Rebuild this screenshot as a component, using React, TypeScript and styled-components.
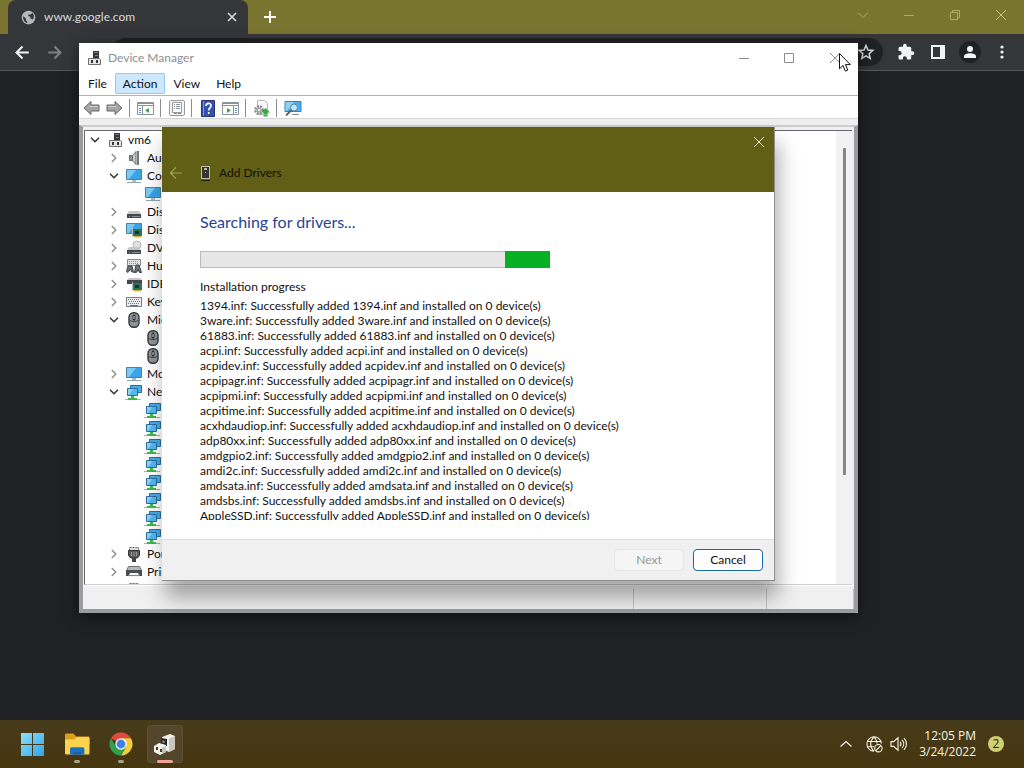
import React from "react";
import styled, { createGlobalStyle, css } from "styled-components";

const GlobalStyle = createGlobalStyle`
  * { box-sizing: border-box; }
  html, body, #root { height: 100%; }
  body {
    margin: 0;
    overflow: hidden;
    background: #202124;
    font-family: Lato, "Open Sans", sans-serif;
    font-size: 12px;
    line-height: 16px;
    color: #111;
  }
  button, input { font: inherit; color: inherit; }
  button { border: 0; padding: 0; background: none; }
  svg { display: block; flex: none; }
`;

/* ---------- Desktop ---------- */

const Desktop = styled.div`
  position: relative;
  display: flex;
  flex-direction: column;
  height: 100vh;
`;

/* ---------- Browser ---------- */

const Browser = styled.main`
  flex: 1;
  display: flex;
  flex-direction: column;
  background: #202124;
`;

const TabStrip = styled.header`
  display: flex;
  height: 34px;
  padding-left: 8px;
  background: #7a7431;
`;

const Tab = styled.div`
  display: flex;
  align-items: center;
  gap: 8px;
  width: 240px;
  padding: 0 8px 0 13px;
  border-radius: 8px 8px 0 0;
  background: #35363a;
  color: #d8d9dc;
`;

const TabTitle = styled.span`
  flex: 1;
`;

const IconButton = styled.button<{ $w?: number; $h?: number }>`
  display: flex;
  align-items: center;
  justify-content: center;
  width: ${(p) => p.$w ?? 16}px;
  height: ${(p) => p.$h ?? 16}px;
`;

const CaptionButtons = styled.div`
  display: flex;
  margin-left: auto;
`;

const BrowserBar = styled.div`
  display: flex;
  align-items: center;
  height: 37px;
  padding: 0 6px;
  border-bottom: 1px solid #55565a;
  background: #35363a;
  color: #f1f3f4;
`;

const AddressBar = styled.div`
  flex: 1;
  display: flex;
  align-items: center;
  height: 28px;
  margin: 0 7px 0 42px;
  padding-right: 8px;
  border-radius: 14px;
  background: #202124;
`;

const AddressInput = styled.input`
  flex: 1;
  min-width: 0;
  padding: 0 14px;
  border: 0;
  outline: 0;
  background: none;
`;

/* ---------- Device Manager window ---------- */

const ManagerWindow = styled.section`
  position: absolute;
  left: 79px;
  top: 43px;
  display: flex;
  flex-direction: column;
  width: 779px;
  height: 570px;
  background: #fff;
  box-shadow: 0 4px 14px rgba(0, 0, 0, 0.5);
`;

const TitleBar = styled.header`
  display: flex;
  align-items: center;
  gap: 6px;
  height: 29px;
  padding-left: 7px;
  color: #8e8e8e;
`;

const MenuBar = styled.nav`
  display: flex;
  height: 24px;
  padding: 1px;
  border-bottom: 1px solid #b4b4b4;
`;

const MenuItem = styled.button<{ $active?: boolean }>`
  padding: 0 8px;
  ${(p) =>
    p.$active &&
    css`
      background: #cce8ff;
      box-shadow: inset 0 0 0 1px #99c9ef;
      border-radius: 2px;
    `}
`;

const ToolBar = styled.div`
  display: flex;
  align-items: center;
  height: 23px;
  padding: 2px 0 0 1px;
  border-bottom: 1px solid #d5d5d5;
`;

const ToolSeparator = styled.span`
  width: 1px;
  height: 18px;
  margin: 0 4px 0 3px;
  background: #8c8c8c;
`;

const ManagerBody = styled.div`
  flex: 1;
  display: flex;
  flex-direction: column;
  min-height: 0;
  margin-top: 6px;
  border: solid #9b9b9f;
  border-width: 2px 4px 4px;
  border-top-color: #cbccd0;
  background: #f0f0f0;
  box-shadow: 0 -6px 0 #efefef;
`;

const TreePane = styled.div`
  flex: 1;
  display: flex;
  min-height: 0;
  margin: 3px 2px 0 1px;
  border: 1px solid #66666c;
  border-right: 0;
  border-bottom-color: #d0d0d0;
  background: #fff;
`;

const Tree = styled.ul`
  flex: 1;
  margin: 0;
  padding: 0;
  overflow: hidden;
  list-style: none;
`;

const TreeRow = styled.li<{ $level: number }>`
  display: flex;
  align-items: center;
  height: 18px;
  padding-left: ${(p) => 2 + p.$level * 19}px;
`;

const Twisty = styled.span`
  display: flex;
  justify-content: center;
  width: 16px;
`;

const TreeIcon = styled.span`
  display: flex;
  justify-content: center;
  width: 24px;
  margin-right: 1px;
`;

const ScrollTrack = styled.div`
  width: 16px;
  padding: 17px 6px 109px 7px;
  background: #f2f2f2;
`;

const ScrollThumb = styled.div`
  height: 100%;
  border-radius: 1px;
  background: #858585;
`;

const StatusBar = styled.footer`
  display: grid;
  grid-template-columns: 1fr 133px 87px;
  height: 24px;
  padding-top: 3px;
  border-top: 1px solid #fff;
`;

const StatusCell = styled.span`
  border-right: 1px solid #c4c4c4;
`;

/* ---------- Add Drivers dialog ---------- */

const Dialog = styled.section`
  position: absolute;
  left: 162px;
  top: 127px;
  display: flex;
  flex-direction: column;
  width: 613px;
  height: 454px;
  border: solid #8f8f8f;
  border-width: 0 1px 1px 0;
  background: #fff;
  box-shadow: 3px 16px 20px rgba(0, 0, 0, 0.34);
`;

const DialogHead = styled.header`
  display: flex;
  flex-direction: column;
  height: 65px;
  background: #615f15;
`;

const DialogCaption = styled.div`
  display: flex;
  justify-content: flex-end;
`;

const DialogTitle = styled.div`
  display: flex;
  align-items: center;
  height: 34px;
  padding-left: 6px;
  color: #0f0f05;
`;

const DialogGlyph = styled.span`
  padding: 0 9px 0 17px;
`;

const DialogBody = styled.div`
  flex: 1;
  min-height: 0;
  padding: 19px 38px 0;
`;

const Heading = styled.h1`
  margin: 0 0 19px;
  font-size: 16px;
  line-height: 21px;
  font-weight: 400;
  color: #1f4596;
`;

const Progress = styled.div`
  display: flex;
  justify-content: flex-end;
  width: 350px;
  height: 17px;
  margin-bottom: 11px;
  border: 1px solid #bcbcbc;
  background: #e6e6e6;
`;

const ProgressChunk = styled.span`
  width: 45px;
  margin: -1px;
  background: #06b025;
`;

const LogLabel = styled.h2`
  margin: 0 0 3px;
  font-size: 12px;
  line-height: 16px;
  font-weight: 400;
`;

const Log = styled.ul`
  height: 222px;
  margin: 0;
  padding: 0;
  overflow: hidden;
  list-style: none;
`;

const LogLine = styled.li`
  line-height: 15px;
  white-space: nowrap;
`;

const DialogFoot = styled.footer`
  display: flex;
  align-items: center;
  justify-content: flex-end;
  gap: 9px;
  height: 41px;
  padding: 0 11px 0 0;
  border-top: 1px solid #dfdfdf;
  background: #f0f0f0;
`;

const PushButton = styled.button`
  width: 70px;
  height: 22px;
  border: 1px solid #1c6ba0;
  border-radius: 4px;
  background: #fdfdfd;
  &:disabled {
    border-color: #e6e6e6;
    background: #f5f5f5;
    color: #959595;
  }
`;

/* ---------- Taskbar ---------- */

const Taskbar = styled.footer`
  display: flex;
  align-items: center;
  height: 48px;
  padding: 0 20px 0 15px;
  background: linear-gradient(#483b1b, #45360f);
  color: #f7f4e6;
  font-family: "Open Sans", sans-serif;
`;

const TaskButton = styled.button<{ $active?: boolean }>`
  display: flex;
  flex-direction: column;
  align-items: center;
  justify-content: space-between;
  width: 36px;
  height: 38px;
  margin-right: 8px;
  padding: 7px 0 0;
  border-radius: 4px;
  ${(p) =>
    p.$active &&
    css`
      background: #54462b;
      box-shadow: inset 0 0 0 1px #5e5032;
    `}
`;

const RunMark = styled.span<{ $active?: boolean; $hidden?: boolean }>`
  width: ${(p) => (p.$active ? 16 : 6)}px;
  height: 3px;
  border-radius: 2px;
  background: ${(p) => (p.$hidden ? "transparent" : p.$active ? "#f0a39a" : "#a9a487")};
`;

const Tray = styled.div`
  display: flex;
  align-items: center;
  gap: 8px;
  margin-left: auto;
`;

const Clock = styled.time`
  display: flex;
  flex-direction: column;
  width: 62px;
  text-align: right;
  white-space: nowrap;
`;

const Badge = styled.span`
  width: 16px;
  margin-left: 4px;
  border-radius: 8px;
  background: #d2cd73;
  color: #2b250c;
  font-size: 12px;
  text-align: center;
`;

const Pointer = styled.span`
  position: absolute;
  left: 838px;
  top: 52px;
`;

/* ---------- Icons ---------- */

type StrokeProps = { d: string; size?: number; color?: string; width?: number };
const Stroke = ({ d, size = 12, color = "currentColor", width = 1 }: StrokeProps) => (
  <svg width={size} height={size} viewBox="0 0 12 12" fill="none" stroke={color} strokeWidth={width}>
    <path d={d} />
  </svg>
);

const CROSS = "M1 1 11 11M11 1 1 11";
const ARROW_L = "M11 6H1.4M6 1.2 1.2 6 6 10.8";
const ARROW_R = "M1 6H10.6M6 1.2 10.8 6 6 10.8";

const GlobeIcon = () => (
  <svg width="15" height="15" viewBox="0 0 24 24">
    <circle cx="12" cy="12" r="11" fill="#b5b8bc" />
    <path
      fill="#35363a"
      d="M3.500 9.500 8 14v2c0 1.200 1 2 2 2.200v2.500C6 20 3 16 3.500 9.500zM8.500 10h5c1 0 1.500.6 1.500 1.500V14h1.500c1.200 0 2 .7 2.300 1.700 2.700-3.500 2.500-8.600-1-11.300C17.500 6.200 16 7.300 14 7.300h-2V8c0 1.200-.7 2-2 2z"
    />
  </svg>
);

const StarIcon = () => (
  <svg width="18" height="18" viewBox="0 0 24 24" fill="none" stroke="#d5d6d9" strokeWidth="2">
    <path d="m12 3.300 2.600 6 6.500.6-4.900 4.300 1.400 6.400-5.600-3.400-5.600 3.400 1.400-6.400-4.900-4.300 6.500-.6z" />
  </svg>
);

const PuzzleIcon = () => (
  <svg width="18" height="18" viewBox="0 0 24 24" fill="#f1f3f4">
    <path d="M20.500 11H19V7a2 2 0 0 0-2-2h-4V3.500a2.500 2.500 0 0 0-5 0V5H4a2 2 0 0 0-2 2v3.800h1.500a2.700 2.700 0 0 1 0 5.400H2V20a2 2 0 0 0 2 2h3.800v-1.500a2.700 2.700 0 0 1 5.400 0V22H17a2 2 0 0 0 2-2v-4h1.500a2.500 2.500 0 0 0 0-5z" />
  </svg>
);

const SidePanelIcon = () => (
  <svg width="14" height="14" viewBox="0 0 14 14">
    <path fill="#f1f3f4" fillRule="evenodd" d="M0 0h14v14H0zM2 2v10h7V2z" />
  </svg>
);

const AvatarIcon = () => (
  <svg width="22" height="22" viewBox="0 0 22 22">
    <circle cx="11" cy="11" r="11" fill="#202124" />
    <circle cx="11" cy="8" r="3" fill="#f1f3f4" />
    <path fill="#f1f3f4" d="M5 17v-1.500C5 13.200 8 12.200 11 12.200s6 1 6 3.300V17z" />
  </svg>
);

const DotsIcon = () => (
  <svg width="4" height="14" viewBox="0 0 4 14" fill="#f1f3f4">
    <circle cx="2" cy="2" r="1.600" />
    <circle cx="2" cy="7" r="1.600" />
    <circle cx="2" cy="12" r="1.600" />
  </svg>
);

const ComputerIcon = ({ size = 16 }: { size?: number }) => (
  <svg width={size} height={size} viewBox="0 0 16 16">
    <path fill="#33373b" d="M7 1h6v7H7z" />
    <path fill="#7d8388" d="M8 2h4v1H8zM9 5h3v1H9z" />
    <path fill="#e6e4dc" stroke="#6e6e6a" d="M2.500 8.500h11l1 1v5h-12z" />
    <path fill="#33373b" d="M5 10h2v3H5zM10 10h2v3h-2z" />
  </svg>
);

const ToolArrow = ({ flip }: { flip?: boolean }) => (
  <svg width="17" height="16" viewBox="0 0 17 16">
    <path
      fill="#a5a5a5"
      stroke="#666"
      d={flip ? "M16 8 9 1.500V5H1v6h8v3.500z" : "M1 8l7-6.500V5h8v6H8v3.500z"}
    />
    <path stroke="#cfcfcf" d={flip ? "M2 6.500h8" : "M7 6.500h8"} />
  </svg>
);

const PaneIcon = ({ flip }: { flip?: boolean }) => (
  <svg width="17" height="16" viewBox="0 0 17 16">
    <path fill="#fff" stroke="#8b9298" d="M.5 2.500h16v12H.5z" />
    <path fill="#8b9298" d="M1 3h15v1H1zM1 5h15v1H1z" />
    <path stroke="#8b9298" d={flip ? "M11.500 6v8" : "M5.500 6v8"} />
    <path
      stroke="#6a8db5"
      d={flip ? "M13 8.500h2M13 10.500h2M13 12.500h2" : "M2 8.500h2M2 10.500h2M2 12.500h2"}
    />
    <path fill="#4f9a4f" d={flip ? "M5 8v5l4-2.500z" : "M12 8v5l-4-2.500z"} />
  </svg>
);

const PropertiesIcon = () => (
  <svg width="16" height="16" viewBox="0 0 16 16">
    <rect x=".5" y=".5" width="15" height="15" rx="1" fill="#f4f4f4" stroke="#9a9a9a" />
    <path fill="#fff" stroke="#9a9a9a" d="M3.500 2.500h9v10h-9z" />
    <path stroke="#8a96a0" d="M5 4.500h1M5 6.500h1M5 8.500h1M7 4.500h4M7 6.500h4M7 8.500h4" />
    <path fill="#8f8f8f" d="M5 13h3v1H5zM9 13h3v1H9z" />
  </svg>
);

const HelpIcon = () => (
  <svg width="14" height="17" viewBox="0 0 14 17">
    <path fill="#3650ae" stroke="#26327a" d="M.5.5h13v16H.5z" />
    <path stroke="#8094d8" d="M2.500 1v15" />
    <path
      fill="none"
      stroke="#fff"
      strokeWidth="1.600"
      d="M5 6c0-3.400 5-3.400 5-.4C10 7.800 7.700 8 7.700 10.500M7.700 12v2"
    />
  </svg>
);

const ScanIcon = () => (
  <svg width="17" height="17" viewBox="0 0 17 17">
    <path fill="#f7f7f7" stroke="#b7b7b7" d="M4.500.5h7l3 3v11h-10z" />
    <circle cx="6" cy="10" r="3.700" fill="none" stroke="#8b8b8b" strokeWidth="2.400" strokeDasharray="2 1" />
    <circle cx="6" cy="10" r="2" fill="#eee" stroke="#8b8b8b" />
    <path fill="#25b43b" d="m12.500 8 4.500 4.500h-2.500V14h-4v-1.500H8zM10.500 14.700h4V16.500h-4z" />
  </svg>
);

const ScreenSearchIcon = () => (
  <svg width="18" height="17" viewBox="0 0 18 17">
    <path fill="#4aaeea" stroke="#3a7fb0" d="M1 1.500h16v10H1z" />
    <path fill="#8bd0f5" d="M1.500 2h9L3 11H1.500z" />
    <circle cx="10" cy="7.500" r="3.500" fill="#bfe6fa" stroke="#5c8aa5" />
    <path stroke="#596670" strokeWidth="1.800" d="M7.500 10 2 15.500" />
    <path stroke="#8a9298" d="M8 14.500h7" />
  </svg>
);

const MonitorIcon = () => (
  <svg width="18" height="16" viewBox="0 0 18 16">
    <path fill="#39a5e8" stroke="#4d7fa5" d="M1.500 1.500h15v10h-15z" />
    <path fill="#7ccaf4" d="M2 2h9L4 11H2z" />
    <path fill="#b4bcc2" d="M7 12h4v2H7z" />
    <path stroke="#8da4b3" d="M2 14.500h14" />
  </svg>
);

const NetworkIcon = () => (
  <svg width="18" height="17" viewBox="0 0 18 17">
    <path fill="#46acea" stroke="#2a6ea0" d="M5.500 1.500h11v7h-11z" />
    <path fill="#53b7f0" stroke="#2a6ea0" d="M2.500 4.500h10v7h-10z" />
    <path fill="#8fd3f8" d="M3 5h5l-4 6H3z" />
    <path fill="#3fb64a" d="M6 12h3v2h3v2H3v-2h3z" />
    <path stroke="#aab2b5" d="M0 15.500h3M12 15.500h4" />
  </svg>
);

const SpeakerIcon = () => (
  <svg width="16" height="16" viewBox="0 0 16 16">
    <path fill="#8f9396" stroke="#6a6d70" d="M3.500 5.500h3v5h-3z" />
    <path fill="#c9ccce" stroke="#6a6d70" d="M6.500 5.500 10 1.500v13L6.500 10.500z" />
    <path stroke="#77797b" strokeWidth="2" d="M12 1v14" />
  </svg>
);

const DiskIcon = ({ disc }: { disc?: boolean }) => (
  <svg width="16" height="16" viewBox="0 0 16 16">
    {disc && <circle cx="11" cy="5" r="4" fill="#e1e1e1" stroke="#b5b5b5" />}
    <path fill="#c4c6c8" d="M3 7h10l2 3H1z" />
    <path fill="#45484b" d="M1 10h14v4H1z" />
    <path fill="#55d06a" d="M3 12h1v1H3z" />
    <path fill="#8a8d90" d="M6 12h8v1H6z" />
  </svg>
);

const AdapterIcon = ({ screen }: { screen?: boolean }) => (
  <svg width="17" height="16" viewBox="0 0 17 16">
    {screen ? (
      <>
        <path fill="#39a5e8" stroke="#4d7fa5" d="M.5 1.500h15v10H.5z" />
        <path fill="#7ccaf4" d="M1 2h8l-6 9H1z" />
      </>
    ) : (
      <>
        <path fill="#c4c6c8" d="M3 2h11l2 2H1z" />
        <path fill="#45484b" d="M1 4h15v4H1z" />
      </>
    )}
    <path fill="#27755a" d="M7 7h9v7H7z" />
    <path fill="#d9b23d" d="M8 14h7v1.500H8z" />
    <path fill="#16352a" d="M9 9h4v3H9z" />
    <path stroke="#b9bdc0" d="M6.500 6v9" />
  </svg>
);

const HidIcon = () => (
  <svg width="18" height="16" viewBox="0 0 18 16">
    <path fill="#e4e6e8" stroke="#84898d" d="M2.500 1.500h13v6h-13z" />
    <path stroke="#84898d" strokeDasharray="1 1" d="M4 3.500h10M4 5.500h10" />
    <path
      fill="#6d7379"
      stroke="#3f4449"
      d="M3 8h4l1.500 6.500-2-1L5.500 11 3 14.500l-1.500-1zM11 7h3l2.500 7.500h-2L13 11.500l-1.500 3h-2z"
    />
  </svg>
);

const KeyboardIcon = () => (
  <svg width="18" height="16" viewBox="0 0 18 16">
    <path fill="#eceeef" stroke="#777d82" d="M1.500 3.500h15v9h-15z" />
    <path stroke="#6b7176" strokeDasharray="1 1" d="M3 5.500h12M4 7.500h11M3 9.500h12" />
    <path stroke="#6b7176" d="M5 11.500h8" />
  </svg>
);

const MouseIcon = () => (
  <svg width="12" height="16" viewBox="0 0 12 16">
    <rect x="1" y=".7" width="10" height="14.600" rx="4.500" fill="#8f9499" stroke="#33373b" strokeWidth="1.400" />
    <path stroke="#3f4347" d="M2 8.500c2 1.500 6 1.500 8 0" fill="none" />
    <rect x="4.500" y="2.500" width="3" height="6" rx="1.500" fill="#2a2d30" />
    <path stroke="#d6d8da" d="M6 4v3" />
  </svg>
);

const PortIcon = () => (
  <svg width="14" height="16" viewBox="0 0 14 16">
    <path fill="#ddd" stroke="#6a6a6a" strokeDasharray="2 1" d="M2.500 1.500h9v3h-9z" />
    <path fill="#5a5d60" stroke="#333" d="M1.500 4.500h11v5l-2 2.500h-7l-2-2.500z" />
    <path stroke="#999" d="M4.500 6v4M7 6v4M9.500 6v4" />
    <path fill="#444" d="M5 12h4v4H5z" />
  </svg>
);

const PrinterIcon = () => (
  <svg width="18" height="16" viewBox="0 0 18 16">
    <path fill="#b4b8ba" stroke="#6f7376" d="M3.500 2.500h11l2 4h-15z" />
    <path fill="#4a4e51" d="M1 6h16v6H1z" />
    <path fill="#f5f5f5" d="M5 9h8l2 4H3z" />
    <path stroke="#888" d="M4 11.500h10" />
  </svg>
);

const ChevronOpen = () => (
  <svg width="10" height="6" viewBox="0 0 10 6" fill="none" stroke="#333" strokeWidth="1.500">
    <path d="m1 .8 4 4 4-4" />
  </svg>
);

const ChevronClosed = () => (
  <svg width="6" height="10" viewBox="0 0 6 10" fill="none" stroke="#8d8d8d" strokeWidth="1.400">
    <path d="m.8 1 4 4-4 4" />
  </svg>
);

const DeviceIcon = () => (
  <svg width="9" height="15" viewBox="0 0 9 15">
    <path fill="#34362f" stroke="#c3c3b0" d="M.5.5h8v12h-8z" />
    <path fill="#b6b7a8" d="M3 2h3v2H3zM4 6h1v1H4z" />
    <path stroke="#24240c" d="M0 14.500h9" />
  </svg>
);

const WindowsLogo = () => (
  <svg width="24" height="24" viewBox="0 0 24 24">
    <defs>
      <linearGradient id="win" x1="0" y1="0" x2="1" y2="1">
        <stop offset="0" stopColor="#8ee0fb" />
        <stop offset="1" stopColor="#2fa4ea" />
      </linearGradient>
    </defs>
    <path fill="url(#win)" d="M0 1h11v11H0zM12 1h11v11H12zM0 13h11v11H0zM12 13h11v11H12z" />
  </svg>
);

const FolderLogo = () => (
  <svg width="26" height="24" viewBox="0 0 26 24">
    <path fill="#dd9d1c" d="M1 3c0-1 .6-1.500 1.500-1.500h7L12 4.500h12c1 0 1.500.6 1.500 1.500v6H1z" />
    <path fill="#fbd34e" d="M1 7.500h9L13 5h11c1 0 1.500.6 1.500 1.500V21c0 1-.6 1.500-1.500 1.500H2.500C1.500 22.500 1 22 1 21z" />
    <path fill="#1c70c4" d="M6 22.500V17c0-1 .8-1.700 1.700-1.700h11c1 0 1.700.8 1.700 1.700v5.500z" />
    <path fill="#1a5fa8" d="M9.400 20h8v2.500h-8z" />
  </svg>
);

const ChromeLogo = () => (
  <svg width="24" height="24" viewBox="0 0 24 24">
    <path fill="#e2493c" d="M12 12 2.040 6.250A11.500 11.500 0 0 1 21.960 6.250H12z" />
    <path fill="#f7cb3a" d="M12 6.250h9.960A11.500 11.500 0 0 1 12 23.500l5-8.600z" />
    <path fill="#2f9f50" d="M2.040 6.250A11.500 11.500 0 0 0 12 23.500l5-8.600-10-.1z" />
    <circle cx="12" cy="12" r="5.700" fill="#fff" />
    <circle cx="12" cy="12" r="4.400" fill="#3f7fe8" />
  </svg>
);

const ManagerLogo = () => (
  <svg width="24" height="24" viewBox="0 0 24 24">
    <path fill="#f0eee6" d="m9 5 8-3 5 2v13l-6 3-7-3z" />
    <path fill="#c9c6bb" d="m16 7 6-3v13l-6 3z" />
    <path fill="#25282b" d="m8 6 6 1v7l-6-2z" />
    <path fill="#a9aaa5" d="m9.500 8.500 2 .4v2l-2-.5z" />
    <path fill="#f3f1ea" d="m1 14 5-3 7 2v7l-6 3-6-3z" />
    <path fill="#c4c1b5" d="m9 16 4-2v6l-4 2z" />
    <path fill="#3a3d40" d="M3 15h2v3H3zM7 17h2v3H7z" />
  </svg>
);

const NoNetworkIcon = () => (
  <svg width="17" height="17" viewBox="0 0 17 17" fill="none" stroke="currentColor" strokeWidth="1.100">
    <path d="M15.300 7.500A7.200 7.200 0 1 0 8 15.200M1.500 5.500h13.200M1.500 10.800H8M8 .8c-4.500 4.400-4.500 10 0 14.400M8 .8c2 2 3 4 3.200 6.700" />
    <circle cx="12.400" cy="12.200" r="3.700" />
    <path d="m9.900 14.700 5-5" />
  </svg>
);

const VolumeIcon = () => (
  <svg width="17" height="16" viewBox="0 0 17 16" fill="none" stroke="currentColor" strokeWidth="1.100">
    <path d="M1 5.600h2.600L8 1.800v12.400l-4.400-3.800H1zM10 5.800c1.200 1.300 1.200 3.100 0 4.400M12 4c2.200 2.300 2.200 5.700 0 8M14 2.200c3.200 3.300 3.200 8.300 0 11.600" />
  </svg>
);

const PointerIcon = () => (
  <svg width="13" height="21" viewBox="0 0 13 21">
    <path fill="#fff" stroke="#111" d="M1.500 1.500v15.300l3.500-3.300 2.300 5.600 2.500-1-2.300-5.500h4.800z" />
  </svg>
);

/* ---------- Data ---------- */

type TreeNode = { level: number; icon: React.ReactNode; label?: string; open?: boolean };

const network = Array.from({ length: 8 }, (): TreeNode => ({ level: 2, icon: <NetworkIcon /> }));

const tree: TreeNode[] = [
  { level: 0, icon: <ComputerIcon />, label: "vm6", open: true },
  { level: 1, icon: <SpeakerIcon />, label: "Audio", open: false },
  { level: 1, icon: <MonitorIcon />, label: "Computer", open: true },
  { level: 2, icon: <MonitorIcon /> },
  { level: 1, icon: <DiskIcon />, label: "Disk drives", open: false },
  { level: 1, icon: <AdapterIcon screen />, label: "Display", open: false },
  { level: 1, icon: <DiskIcon disc />, label: "DVD", open: false },
  { level: 1, icon: <HidIcon />, label: "Human", open: false },
  { level: 1, icon: <AdapterIcon />, label: "IDE", open: false },
  { level: 1, icon: <KeyboardIcon />, label: "Keyboards", open: false },
  { level: 1, icon: <MouseIcon />, label: "Mice", open: true },
  { level: 2, icon: <MouseIcon /> },
  { level: 2, icon: <MouseIcon /> },
  { level: 1, icon: <MonitorIcon />, label: "Monitors", open: false },
  { level: 1, icon: <NetworkIcon />, label: "Network", open: true },
  ...network,
  { level: 1, icon: <PortIcon />, label: "Ports", open: false },
  { level: 1, icon: <PrinterIcon />, label: "Print", open: false },
  { level: 1, icon: <PortIcon /> },
];

const drivers = [
  "1394", "3ware", "61883", "acpi", "acpidev", "acpipagr", "acpipmi", "acpitime",
  "acxhdaudiop", "adp80xx", "amdgpio2", "amdi2c", "amdsata", "amdsbs", "AppleSSD",
];

/* ---------- Views ---------- */

const BrowserView = () => (
  <Browser>
    <TabStrip>
      <Tab>
        <GlobeIcon />
        <TabTitle>www.google.com</TabTitle>
        <IconButton aria-label="Close tab">
          <Stroke d="M2 2 10 10M10 2 2 10" width={1.600} />
        </IconButton>
      </Tab>
      <IconButton aria-label="New tab" $w={44} $h={34}>
        <Stroke d="M6 0V12M0 6H12" color="#fff" width={2} />
      </IconButton>
      <CaptionButtons>
        <IconButton aria-label="Search tabs" $w={46} $h={29}>
          <Stroke d="m1 3.500 5 5 5-5" color="#b3ab63" />
        </IconButton>
        <IconButton aria-label="Minimize" $w={46} $h={29}>
          <Stroke d="M1 6.500H11" color="#b3ab63" />
        </IconButton>
        <IconButton aria-label="Restore" $w={46} $h={29}>
          <Stroke d="M1.500 3.500h7v7h-7zM3.500 3.500v-2h7v7h-2" color="#b3ab63" />
        </IconButton>
        <IconButton aria-label="Close" $w={46} $h={29}>
          <Stroke d={CROSS} color="#c6bf7d" />
        </IconButton>
      </CaptionButtons>
    </TabStrip>
    <BrowserBar>
      <IconButton aria-label="Back" $w={32} $h={28}>
        <Stroke d={ARROW_L} size={15} width={1.600} />
      </IconButton>
      <IconButton aria-label="Forward" $w={32} $h={28}>
        <Stroke d={ARROW_R} size={15} width={1.600} color="#7f8084" />
      </IconButton>
      <AddressBar>
        <AddressInput aria-label="Address" />
        <StarIcon />
      </AddressBar>
      <IconButton aria-label="Extensions" $w={32} $h={28}><PuzzleIcon /></IconButton>
      <IconButton aria-label="Side panel" $w={32} $h={28}><SidePanelIcon /></IconButton>
      <IconButton aria-label="Profile" $w={32} $h={28}><AvatarIcon /></IconButton>
      <IconButton aria-label="Menu" $w={32} $h={28}><DotsIcon /></IconButton>
    </BrowserBar>
  </Browser>
);

const ManagerView = () => (
  <ManagerWindow>
    <TitleBar>
      <ComputerIcon />
      Device Manager
      <CaptionButtons>
        <IconButton aria-label="Minimize" $w={45} $h={29}><Stroke d="M1 6.500H11" /></IconButton>
        <IconButton aria-label="Maximize" $w={45} $h={29}><Stroke d="M1.500 1.500h9v9h-9z" /></IconButton>
        <IconButton aria-label="Close" $w={47} $h={29}><Stroke d={CROSS} /></IconButton>
      </CaptionButtons>
    </TitleBar>
    <MenuBar>
      <MenuItem>File</MenuItem>
      <MenuItem $active>Action</MenuItem>
      <MenuItem>View</MenuItem>
      <MenuItem>Help</MenuItem>
    </MenuBar>
    <ToolBar>
      <IconButton aria-label="Back" $w={23}><ToolArrow /></IconButton>
      <IconButton aria-label="Forward" $w={23}><ToolArrow flip /></IconButton>
      <ToolSeparator />
      <IconButton aria-label="Show console tree" $w={23}><PaneIcon /></IconButton>
      <ToolSeparator />
      <IconButton aria-label="Properties" $w={23}><PropertiesIcon /></IconButton>
      <ToolSeparator />
      <IconButton aria-label="Help" $w={23}><HelpIcon /></IconButton>
      <IconButton aria-label="Show action pane" $w={23}><PaneIcon flip /></IconButton>
      <ToolSeparator />
      <IconButton aria-label="Scan for changes" $w={23}><ScanIcon /></IconButton>
      <ToolSeparator />
      <IconButton aria-label="Add drivers" $w={23}><ScreenSearchIcon /></IconButton>
    </ToolBar>
    <ManagerBody>
      <TreePane>
        <Tree>
          {tree.map((n, i) => (
            <TreeRow key={i} $level={n.level}>
              <Twisty>{n.open === undefined ? null : n.open ? <ChevronOpen /> : <ChevronClosed />}</Twisty>
              <TreeIcon>{n.icon}</TreeIcon>
              {n.label}
            </TreeRow>
          ))}
        </Tree>
        <ScrollTrack><ScrollThumb /></ScrollTrack>
      </TreePane>
      <StatusBar>
        <StatusCell />
        <StatusCell />
        <StatusCell />
      </StatusBar>
    </ManagerBody>
  </ManagerWindow>
);

const DialogView = () => (
  <Dialog role="dialog" aria-labelledby="dialog-title">
    <DialogHead>
      <DialogCaption>
        <IconButton aria-label="Close" $w={31} $h={29}><Stroke d={CROSS} color="#e6e6d0" /></IconButton>
      </DialogCaption>
      <DialogTitle>
        <IconButton aria-label="Back"><Stroke d={ARROW_L} size={14} color="#a8a55e" /></IconButton>
        <DialogGlyph><DeviceIcon /></DialogGlyph>
        <span id="dialog-title">Add Drivers</span>
      </DialogTitle>
    </DialogHead>
    <DialogBody>
      <Heading>Searching for drivers...</Heading>
      <Progress role="progressbar" aria-label="Searching for drivers">
        <ProgressChunk />
      </Progress>
      <LogLabel>Installation progress</LogLabel>
      <Log>
        {drivers.map((d) => (
          <LogLine key={d}>{`${d}.inf: Successfully added ${d}.inf and installed on 0 device(s)`}</LogLine>
        ))}
      </Log>
    </DialogBody>
    <DialogFoot>
      <PushButton disabled>Next</PushButton>
      <PushButton>Cancel</PushButton>
    </DialogFoot>
  </Dialog>
);

const TaskbarView = () => (
  <Taskbar>
    <TaskButton aria-label="Start"><WindowsLogo /><RunMark $hidden /></TaskButton>
    <TaskButton aria-label="File Explorer"><FolderLogo /><RunMark /></TaskButton>
    <TaskButton aria-label="Chrome"><ChromeLogo /><RunMark /></TaskButton>
    <TaskButton aria-label="Device Manager" $active><ManagerLogo /><RunMark $active /></TaskButton>
    <Tray>
      <IconButton aria-label="Show hidden icons" $w={24}><Stroke d="m.5 8.500 5.500-5 5.500 5" width={1.200} /></IconButton>
      <IconButton aria-label="Network"><NoNetworkIcon /></IconButton>
      <IconButton aria-label="Volume"><VolumeIcon /></IconButton>
      <Clock>
        <span>12:05 PM</span>
        <span>3/24/2022</span>
      </Clock>
      <Badge>2</Badge>
    </Tray>
  </Taskbar>
);

export default function App() {
  return (
    <>
      <GlobalStyle />
      <Desktop>
        <BrowserView />
        <TaskbarView />
        <ManagerView />
        <DialogView />
        <Pointer><PointerIcon /></Pointer>
      </Desktop>
    </>
  );
}
